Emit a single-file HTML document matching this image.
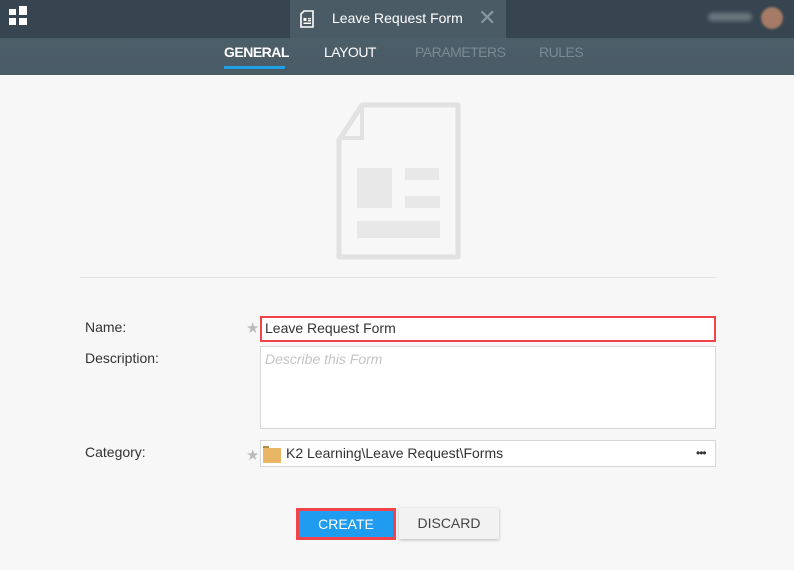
<!DOCTYPE html>
<html><head><style>
*{margin:0;padding:0;box-sizing:border-box}
body{width:794px;height:570px;background:#f7f7f7;font-family:"Liberation Sans",sans-serif;position:relative;overflow:hidden}
.a{position:absolute}
.top{left:0;top:0;width:794px;height:38px;background:#36454f}
.tab{left:290px;top:0;width:216px;height:38px;background:#4a5b66}
.sub{left:0;top:38px;width:794px;height:37px;background:linear-gradient(#4c5e69,#4a5b66)}
.nav{top:44px;font-size:14px;color:#fff;letter-spacing:-0.5px}
.lbl{left:85px;font-size:14px;color:#333}
.inp{background:#fff;border:1px solid #d6d6d6}
.star{left:246px;color:#bbb;font-size:15px}
</style></head><body>
<div class="a top"></div>
<div class="a" style="left:9px;top:9px;width:7px;height:6px;background:#fff"></div>
<div class="a" style="left:19px;top:6px;width:8px;height:9px;background:#fff"></div>
<div class="a" style="left:9px;top:18px;width:7px;height:7px;background:#fff"></div>
<div class="a" style="left:19px;top:18px;width:8px;height:7px;background:#fff"></div>
<div class="a tab"></div>
<svg class="a" style="left:300px;top:10px" width="14" height="18" viewBox="0 0 14 18"><path d="M4 1H13V17H1V4Z" fill="none" stroke="#fff" stroke-width="1.6"/><rect x="3.5" y="8" width="3" height="3" fill="#fff"/><rect x="8" y="8" width="3" height="1.3" fill="#fff"/><rect x="8" y="10" width="3" height="1.3" fill="#fff"/><rect x="3.5" y="12.5" width="7.5" height="1.5" fill="#fff"/></svg>
<div class="a" style="left:332px;top:10px;font-size:14px;color:#fff">Leave Request Form</div>
<div class="a" style="left:478px;top:5px;font-size:22px;color:#8a979f;line-height:26px">✕</div>
<div class="a" style="left:708px;top:13px;width:44px;height:8px;background:#6b787f;border-radius:4px;filter:blur(2px)"></div>
<div class="a" style="left:761px;top:7px;width:22px;height:22px;border-radius:50%;background:#a57a66;filter:blur(1px)"></div>
<div class="a sub"></div>
<div class="a nav" style="left:224px;font-weight:bold">GENERAL</div>
<div class="a" style="left:224px;top:66px;width:61px;height:3px;background:#1ea1e6"></div>
<div class="a nav" style="left:324px">LAYOUT</div>
<div class="a nav" style="left:415px;color:#7b8a93">PARAMETERS</div>
<div class="a nav" style="left:539px;color:#7b8a93">RULES</div>
<svg class="a" style="left:336px;top:102px" width="126" height="158" viewBox="0 0 126 158"><path d="M26 3H122V155H3V38Z" fill="#f7f7f7" stroke="#e2e2e2" stroke-width="5" stroke-linejoin="round"/><path d="M26 5V36H6" fill="none" stroke="#e2e2e2" stroke-width="4"/><rect x="21" y="66" width="35" height="40" fill="#e8e8e8"/><rect x="69" y="66" width="34" height="12" fill="#e8e8e8"/><rect x="69" y="94" width="35" height="12" fill="#e8e8e8"/><rect x="21" y="119" width="83" height="17" fill="#e8e8e8"/></svg>
<div class="a" style="left:80px;top:277px;width:636px;height:1px;background:#e2e2e2"></div>
<div class="a lbl" style="top:319px">Name:</div>
<div class="a lbl" style="top:350px">Description:</div>
<div class="a lbl" style="top:444px">Category:</div>
<div class="a star" style="top:319px">★</div>
<div class="a star" style="top:446px">★</div>
<div class="a inp" style="left:260px;top:316px;width:456px;height:26px;border:2px solid #f0444a"></div>
<div class="a" style="left:265px;top:320px;font-size:14px;color:#333">Leave Request Form</div>
<div class="a inp" style="left:260px;top:346px;width:456px;height:83px"></div>
<div class="a" style="left:265px;top:351px;font-size:14px;color:#c4c4c4;font-style:italic">Describe this Form</div>
<div class="a inp" style="left:260px;top:440px;width:456px;height:27px"></div>
<div class="a" style="left:263px;top:446px;width:6px;height:3px;background:#b98a46"></div>
<div class="a" style="left:263px;top:448px;width:18px;height:15px;background:#e9b666"></div>
<div class="a" style="left:286px;top:445px;font-size:14px;color:#333">K2 Learning\Leave Request\Forms</div>
<div class="a" style="left:696px;top:446px;font-size:12px;color:#333;letter-spacing:-1px">•••</div>
<div class="a" style="left:296px;top:508px;width:100px;height:32px;background:#1f9bf0;border:3px solid #f0444a;color:#fff;font-size:14px;text-align:center;line-height:26px">CREATE</div>
<div class="a" style="left:399px;top:508px;width:100px;height:31px;background:#f2f2f2;color:#444;font-size:14px;text-align:center;line-height:31px;box-shadow:0 1px 3px rgba(0,0,0,.25)">DISCARD</div>
</body></html>
